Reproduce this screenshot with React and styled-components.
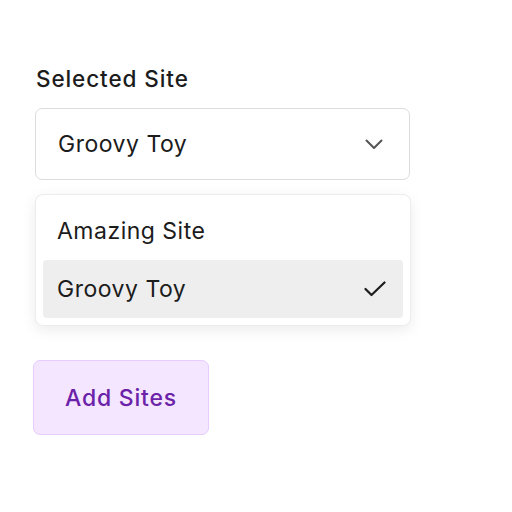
import React, { useState } from "react";
import styled, { createGlobalStyle } from "styled-components";

const GlobalStyle = createGlobalStyle`
  html, body {
    margin: 0;
    padding: 0;
    background: #ffffff;
    font-family: Inter, "Noto Sans", "Liberation Sans", sans-serif;
    color: #1c1c1c;
  }
`;

const Page = styled.div`
  display: flex;
  flex-direction: column;
  align-items: flex-start;
  padding: 64px 0 0 35px;
  width: 375px;
`;

const Label = styled.div`
  font-size: 22.5px;
  font-weight: 500;
  letter-spacing: 0.9px;
  line-height: 30px;
  color: #1c1c1c;
  margin-bottom: 14px;
  margin-left: 1px;
`;

// Select trigger
const Trigger = styled.button`
  display: flex;
  align-items: center;
  justify-content: space-between;
  box-sizing: border-box;
  width: 375px;
  height: 72px;
  padding: 0 26px 0 22px;
  background: #fff;
  border: 1px solid #dcdcdc;
  border-radius: 7px;
  font-family: inherit;
  font-size: 23px;
  letter-spacing: 0.5px;
  color: #1c1c1c;
  cursor: pointer;
`;

const Menu = styled.ul`
  list-style: none;
  box-sizing: border-box;
  width: 376px;
  margin: 14px 0 0;
  padding: 7px;
  background: #fff;
  border: 1px solid #ececec;
  border-radius: 8px;
  box-shadow: 0 4px 14px rgba(0, 0, 0, 0.08);
`;

const Option = styled.li`
  display: flex;
  align-items: center;
  justify-content: space-between;
  height: 58px;
  padding: 0 17px 0 14px;
  border-radius: 4px;
  font-size: 23px;
  letter-spacing: 0.5px;
  color: #1c1c1c;
  background: ${(p) => (p.$active ? "#eeeeee" : "transparent")};
  cursor: pointer;
`;

const AddButton = styled.button`
  margin-top: 34px;
  margin-left: -2px;
  width: 176px;
  height: 75px;
  background: #f4e6ff;
  border: 1px solid #e6ccff;
  border-radius: 7px;
  font-family: inherit;
  font-size: 23px;
  font-weight: 500;
  letter-spacing: 0.8px;
  color: #6b21a8;
  cursor: pointer;
`;

const Chevron = () => (
  <svg width="18" height="11" viewBox="0 0 18 11" fill="none">
    <path d="M1.5 1.5L9 9L16.5 1.5" stroke="#555" strokeWidth="2" strokeLinecap="round" strokeLinejoin="round" />
  </svg>
);

const Check = () => (
  <svg width="22" height="16" viewBox="0 0 22 16" fill="none">
    <path d="M1.5 8L7.5 14L20.5 1.5" stroke="#1c1c1c" strokeWidth="2.2" strokeLinecap="round" strokeLinejoin="round" />
  </svg>
);

const sites = ["Amazing Site", "Groovy Toy"];

export default function App() {
  const [selected, setSelected] = useState("Groovy Toy");

  return (
    <>
      <GlobalStyle />
      <Page>
        <Label>Selected Site</Label>
        <Trigger>
          <span>{selected}</span>
          <Chevron />
        </Trigger>
        <Menu>
          {sites.map((s) => (
            <Option key={s} $active={s === selected} onClick={() => setSelected(s)}>
              <span>{s}</span>
              {s === selected && <Check />}
            </Option>
          ))}
        </Menu>
        <AddButton>Add Sites</AddButton>
      </Page>
    </>
  );
}
